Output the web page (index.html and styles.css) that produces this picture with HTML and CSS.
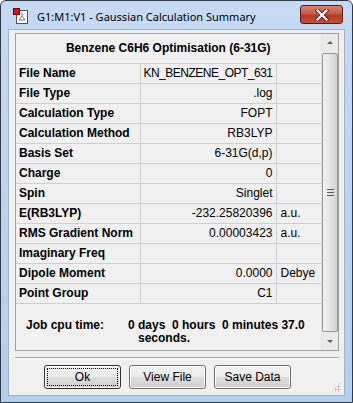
FILE: index.html
```html
<!DOCTYPE html>
<html lang="en">
<head>
  <meta charset="UTF-8" />
  <meta name="viewport" content="width=device-width, initial-scale=1.0"/>
  <title>Gaussian Calculation Summary</title>
  <link rel="stylesheet" href="styles.css">
</head>
<body>
  <div class="window">
    <div class="titlebar">
      <svg class="app-icon" width="16" height="16" viewBox="0 0 16 16">
        <rect x="3.5" y="2.5" width="11" height="13" fill="#fff" stroke="#555"/>
        <path d="M9 5 L9 8 M9 8 L6 12 M9 8 L12 12 M6 12 L12 12" stroke="#777" stroke-width="1" fill="none"/>
        <rect x="0.5" y="0.5" width="6" height="6" fill="#e01010" stroke="#7a0000"/>
      </svg>
      <span class="title">G1:M1:V1 - Gaussian Calculation Summary</span>
      <div class="close-btn">
        <svg width="14" height="12" viewBox="0 0 14 12">
          <path d="M2.5 1.5 L11.5 10.5 M11.5 1.5 L2.5 10.5" stroke="#5e1e14" stroke-width="4" stroke-linecap="square"/>
          <path d="M2.5 1.5 L11.5 10.5 M11.5 1.5 L2.5 10.5" stroke="#fff" stroke-width="2.2" stroke-linecap="square"/>
        </svg>
      </div>
    </div>

    <div class="client">
      <div class="panel">
        <div class="content">
          <table class="summary">
            <colgroup>
              <col class="col-label">
              <col class="col-value">
              <col class="col-unit">
            </colgroup>
            <tr><th colspan="3">Benzene C6H6 Optimisation (6-31G)</th></tr>
            <tr><td class="label">File Name</td><td class="value tight">KN_BENZENE_OPT_631</td><td class="unit"></td></tr>
            <tr><td class="label">File Type</td><td class="value">.log</td><td class="unit"></td></tr>
            <tr><td class="label">Calculation Type</td><td class="value">FOPT</td><td class="unit"></td></tr>
            <tr><td class="label">Calculation Method</td><td class="value">RB3LYP</td><td class="unit"></td></tr>
            <tr><td class="label">Basis Set</td><td class="value">6-31G(d,p)</td><td class="unit"></td></tr>
            <tr><td class="label">Charge</td><td class="value">0</td><td class="unit"></td></tr>
            <tr><td class="label">Spin</td><td class="value">Singlet</td><td class="unit"></td></tr>
            <tr><td class="label">E(RB3LYP)</td><td class="value">-232.25820396</td><td class="unit">a.u.</td></tr>
            <tr><td class="label">RMS Gradient Norm</td><td class="value">0.00003423</td><td class="unit">a.u.</td></tr>
            <tr><td class="label">Imaginary Freq</td><td class="value"></td><td class="unit"></td></tr>
            <tr><td class="label">Dipole Moment</td><td class="value">0.0000</td><td class="unit">Debye</td></tr>
            <tr><td class="label">Point Group</td><td class="value">C1</td><td class="unit"></td></tr>
          </table>
          <div class="cpu">
            <span class="cpu-label">Job cpu time:</span>
            <span class="cpu-value">0 days&nbsp; 0 hours&nbsp; 0 minutes 37.0<br><span class="cpu-tail">seconds.</span></span>
          </div>
        </div>
        <div class="scrollbar">
          <div class="arrow up"></div>
          <div class="track">
            <div class="thumb"><span class="grip-lines"></span></div>
          </div>
          <div class="arrow down"></div>
        </div>
      </div>

      <div class="separator"></div>

      <div class="buttons">
        <button class="btn default"><span>Ok</span></button>
        <button class="btn"><span>View File</span></button>
        <button class="btn"><span>Save Data</span></button>
      </div>
      <div class="size-grip"></div>
    </div>
  </div>
</body>
</html>
```

FILE: styles.css
```css
* {
  box-sizing: border-box;
}

body {
  margin: 0;
  background: #fff;
  font-family: "Liberation Sans", Arial, sans-serif;
}

.window {
  width: 353px;
  height: 403px;
  border: 1px solid #2e3a48;
  border-radius: 6px 6px 0 0;
  background: linear-gradient(to bottom, #c6dbf3, #b9d2ee 60%, #b4cfed);
  display: flex;
  flex-direction: column;
  padding: 0 7px 6px 7px;
}

.titlebar {
  height: 28px;
  display: flex;
  align-items: center;
}

.app-icon {
  margin-left: 5px;
  margin-top: 2px;
}

.title {
  margin-left: 8px;
  font-family: "Noto Sans", sans-serif;
  font-size: 11px;
  color: #000;
  margin-top: 2px;
}

.close-btn {
  margin-left: auto;
  width: 43px;
  height: 19px;
  margin-top: -1px;
  margin-right: 2px;
  border: 1px solid #5c1a12;
  border-radius: 3px;
  background: linear-gradient(to bottom, #d88471, #c65a45 45%, #b23a26 55%, #c44e35);
  display: flex;
  align-items: center;
  justify-content: center;
}

.client {
  flex: 1;
  background: #f0f0f0;
  border: 1px solid #9fb2c8;
  display: flex;
  flex-direction: column;
  position: relative;
  padding: 3px 5px 0 6px;
}

.panel {
  height: 318px;
  border: 1px solid #a0a0a0;
  display: flex;
}

.content {
  width: 305px;
}

.summary {
  border-collapse: collapse;
  width: 305px;
  table-layout: fixed;
  font-size: 12px;
}

.col-label {
  width: 124px;
}

.col-value {
  width: 136px;
}

.col-unit {
  width: 45px;
}

.summary th {
  height: 29px;
  font-weight: bold;
  text-align: center;
  border-bottom: 1px solid #cfcfcf;
  border-right: 1px solid #cfcfcf;
  padding: 0;
}

.summary td {
  height: 20px;
  padding: 0 3px;
  border-bottom: 1px solid #cfcfcf;
  border-right: 1px solid #cfcfcf;
  white-space: nowrap;
  overflow: hidden;
}

.summary .label {
  font-weight: bold;
}

.summary .value {
  text-align: right;
}

.summary .tight {
  letter-spacing: -0.5px;
  padding-left: 0;
}

.summary .unit {
  padding-left: 4px;
}

.cpu {
  display: flex;
  font-size: 12px;
  font-weight: bold;
  line-height: 13px;
  padding-top: 15px;
}

.cpu-label {
  width: 112px;
  padding-left: 10px;
  flex: none;
}

.cpu-value {
  white-space: nowrap;
}

.cpu-tail {
  display: inline-block;
  padding-left: 10px;
}

.scrollbar {
  width: 17px;
  display: flex;
  flex-direction: column;
  background: #ebebeb;
  border-left: 1px solid #e3e3e3;
}

.arrow {
  height: 17px;
  display: flex;
  align-items: center;
  justify-content: center;
}

.arrow::before {
  content: "";
  border-left: 3px solid transparent;
  border-right: 3px solid transparent;
}

.arrow.up::before {
  border-bottom: 3px solid #606060;
}

.arrow.down::before {
  border-top: 3px solid #606060;
}

.track {
  flex: 1;
  display: flex;
  padding: 2px 0 1px;
}

.thumb {
  flex: 1;
  border: 1px solid #979797;
  border-radius: 2px;
  background: linear-gradient(to right, #f4f4f4, #e4e4e4 50%, #d4d4d4);
  display: flex;
  align-items: center;
  justify-content: center;
}

.grip-lines {
  width: 7px;
  height: 7px;
  border-top: 1px solid #555;
  border-bottom: 1px solid #555;
  position: relative;
}

.grip-lines::after {
  content: "";
  position: absolute;
  left: 0;
  right: 0;
  top: 2px;
  border-top: 1px solid #555;
}

.separator {
  margin-top: 6px;
  height: 2px;
  border-top: 1px solid #a0a0a0;
  border-bottom: 1px solid #fff;
}

.buttons {
  display: flex;
  gap: 8px;
  padding-left: 29px;
  margin-top: 6px;
}

.btn {
  width: 77px;
  height: 24px;
  padding: 0;
  border: 1px solid #707070;
  border-radius: 3px;
  background: linear-gradient(to bottom, #f2f2f2, #ebebeb 50%, #dddddd 50%, #cfcfcf);
  font-family: "Liberation Sans", Arial, sans-serif;
  font-size: 12px;
  color: #000;
  box-shadow: inset 0 0 0 1px #fcfcfc;
}

.btn.default {
  border-color: #333;
}

.btn.default span {
  display: flex;
  align-items: center;
  justify-content: center;
  margin: 2px;
  height: 18px;
  border: 1px dotted #000;
}

.size-grip {
  position: absolute;
  right: 3px;
  bottom: 3px;
  width: 10px;
  height: 10px;
  background:
    radial-gradient(circle, #b0b0b0 0.8px, transparent 1.2px) 0 0 / 3px 3px;
  clip-path: polygon(100% 0, 100% 100%, 0 100%);
}
```
